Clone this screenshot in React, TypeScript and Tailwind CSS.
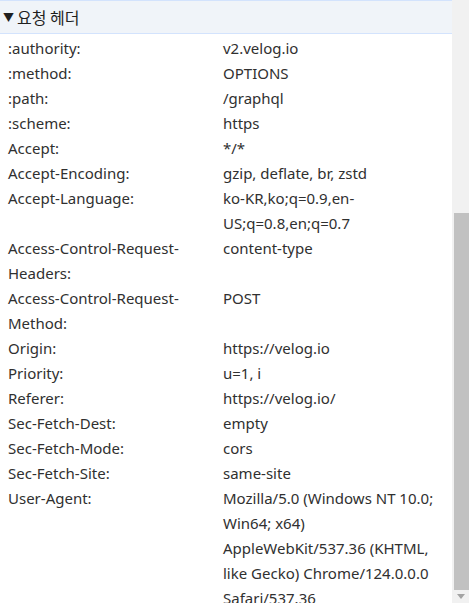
const rows: [string, string][] = [
  [":authority:", "v2.velog.io"],
  [":method:", "OPTIONS"],
  [":path:", "/graphql"],
  [":scheme:", "https"],
  ["Accept:", "*/*"],
  ["Accept-Encoding:", "gzip, deflate, br, zstd"],
  ["Accept-Language:", "ko-KR,ko;q=0.9,en-US;q=0.8,en;q=0.7"],
  ["Access-Control-Request-Headers:", "content-type"],
  ["Access-Control-Request-Method:", "POST"],
  ["Origin:", "https://velog.io"],
  ["Priority:", "u=1, i"],
  ["Referer:", "https://velog.io/"],
  ["Sec-Fetch-Dest:", "empty"],
  ["Sec-Fetch-Mode:", "cors"],
  ["Sec-Fetch-Site:", "same-site"],
  [
    "User-Agent:",
    "Mozilla/5.0 (Windows NT 10.0; Win64; x64) AppleWebKit/537.36 (KHTML, like Gecko) Chrome/124.0.0.0 Safari/537.36",
  ],
];

export default function App() {
  return (
    <div
      className="flex h-[603px] w-[469px] overflow-hidden bg-white text-[15px] leading-[25px] text-[#303030]"
      style={{ fontFamily: '"Noto Sans", "Noto Sans CJK KR", sans-serif' }}
    >
      {/* panel */}
      <div className="flex min-w-0 flex-1 flex-col">
        <div className="flex h-[34px] shrink-0 items-center gap-[3px] border-y border-[#d3e3fd] bg-[#f0f4f9] pl-[3px] text-[16px] text-[#1f1f1f]">
          <span className="text-[11px]">▼</span>
          <span style={{ fontFamily: '"Noto Sans CJK KR", sans-serif' }}>요청 헤더</span>
        </div>
        <div className="pt-[2px]">
          {rows.map(([k, v]) => (
            <div key={k} className="flex">
              <div className="w-[223px] shrink-0 pl-[8px] pr-[20px] break-words">{k}</div>
              <div className="min-w-0 flex-1 pr-[12px] break-words">{v}</div>
            </div>
          ))}
        </div>
      </div>
      {/* scrollbar */}
      <div className="flex w-[17px] shrink-0 flex-col bg-[#f1f1f1]">
        <div className="h-[213px] shrink-0" />
        <div className="ml-[2px] flex-1 bg-[#c1c1c1]" />
        <div className="flex h-[13px] shrink-0 items-center justify-center">
          <svg width="8" height="5" viewBox="0 0 8 5">
            <path d="M0 0h8L4 5z" fill="#a3a3a3" />
          </svg>
        </div>
      </div>
    </div>
  );
}
